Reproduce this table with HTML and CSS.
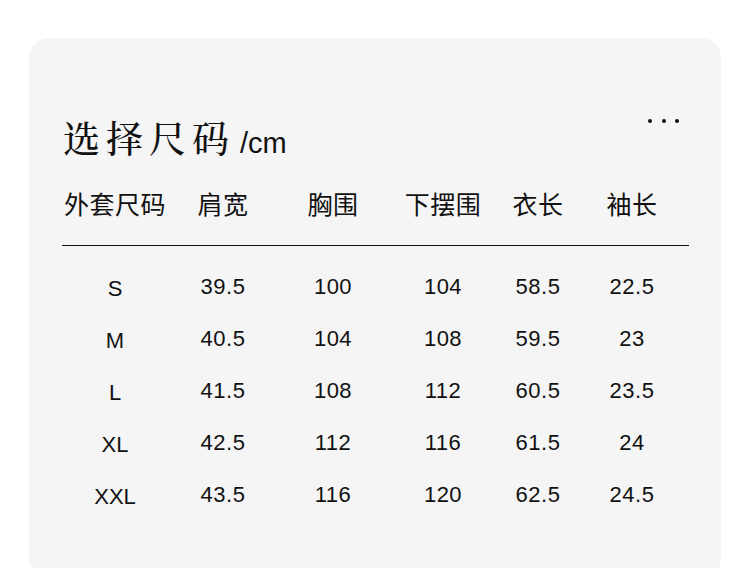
FILE: index.html
```html
<!DOCTYPE html>
<html lang="zh">
<head>
<meta charset="utf-8">
<link rel="stylesheet" href="styles.css">
</head>
<body>
<div class="card">
  <div class="top">
    <h1 class="title">选择尺码<span class="unit">/cm</span></h1>
    <div class="more"><i></i><i></i><i></i></div>
  </div>
  <div class="table">
    <div class="row head">
      <span>外套尺码</span><span>肩宽</span><span>胸围</span><span>下摆围</span><span>衣长</span><span>袖长</span>
    </div>
    <div class="rule"></div>
    <div class="row data"><span class="sz">S</span><span>39.5</span><span>100</span><span>104</span><span>58.5</span><span>22.5</span></div>
    <div class="row data"><span class="sz">M</span><span>40.5</span><span>104</span><span>108</span><span>59.5</span><span>23</span></div>
    <div class="row data"><span class="sz">L</span><span>41.5</span><span>108</span><span>112</span><span>60.5</span><span>23.5</span></div>
    <div class="row data"><span class="sz">XL</span><span>42.5</span><span>112</span><span>116</span><span>61.5</span><span>24</span></div>
    <div class="row data"><span class="sz">XXL</span><span>43.5</span><span>116</span><span>120</span><span>62.5</span><span>24.5</span></div>
  </div>
</div>
</body>
</html>
```
FILE: styles.css
```css
html, body {
  margin: 0;
  padding: 0;
  background: #ffffff;
}
body {
  width: 750px;
  height: 568px;
  overflow: hidden;
  font-family: "Noto Sans CJK SC", sans-serif;
  color: #111111;
}
.card {
  margin: 38px 0 0 29px;
  width: 692px;
  height: 540px;
  box-sizing: border-box;
  background: #f5f5f5;
  border-radius: 20px;
  padding: 0 33px 0 34px;
}
.top {
  display: flex;
  justify-content: space-between;
  align-items: flex-start;
  padding-top: 74px;
}
.title {
  margin: 0;
  font-family: "Noto Serif CJK SC", "Noto Sans CJK SC", serif;
  font-weight: 500;
  font-size: 37px;
  line-height: 50px;
  letter-spacing: 6px;
  height: 50px;
  white-space: nowrap;
}
.unit {
  font-family: "Liberation Sans", sans-serif;
  font-weight: 400;
  font-size: 29px;
  letter-spacing: 0;
  margin-left: 5px;
}
.more {
  display: flex;
  gap: 9.5px;
  margin: 7px 9px 0 0;
}
.more i {
  display: block;
  width: 4px;
  height: 4px;
  border-radius: 50%;
  background: #111111;
}
.table {
  margin-top: 24px;
}
.row {
  display: grid;
  grid-template-columns: 104px 112px 108px 112px 78px 110px;
  justify-items: center;
  align-items: center;
  white-space: nowrap;
}
.head {
  font-size: 25px;
  letter-spacing: 0.5px;
  line-height: 34px;
  height: 34px;
}
.rule {
  height: 1px;
  background: #111111;
  margin: 25px -1px 0 -1px;
}
.data {
  height: 52px;
  font-family: "Liberation Sans", sans-serif;
  font-size: 22px;
  letter-spacing: 0.5px;
}
.rule + .data {
  margin-top: 15px;
}
.sz {
  font-size: 22px;
  letter-spacing: 0;
  padding-top: 4px;
}
```
